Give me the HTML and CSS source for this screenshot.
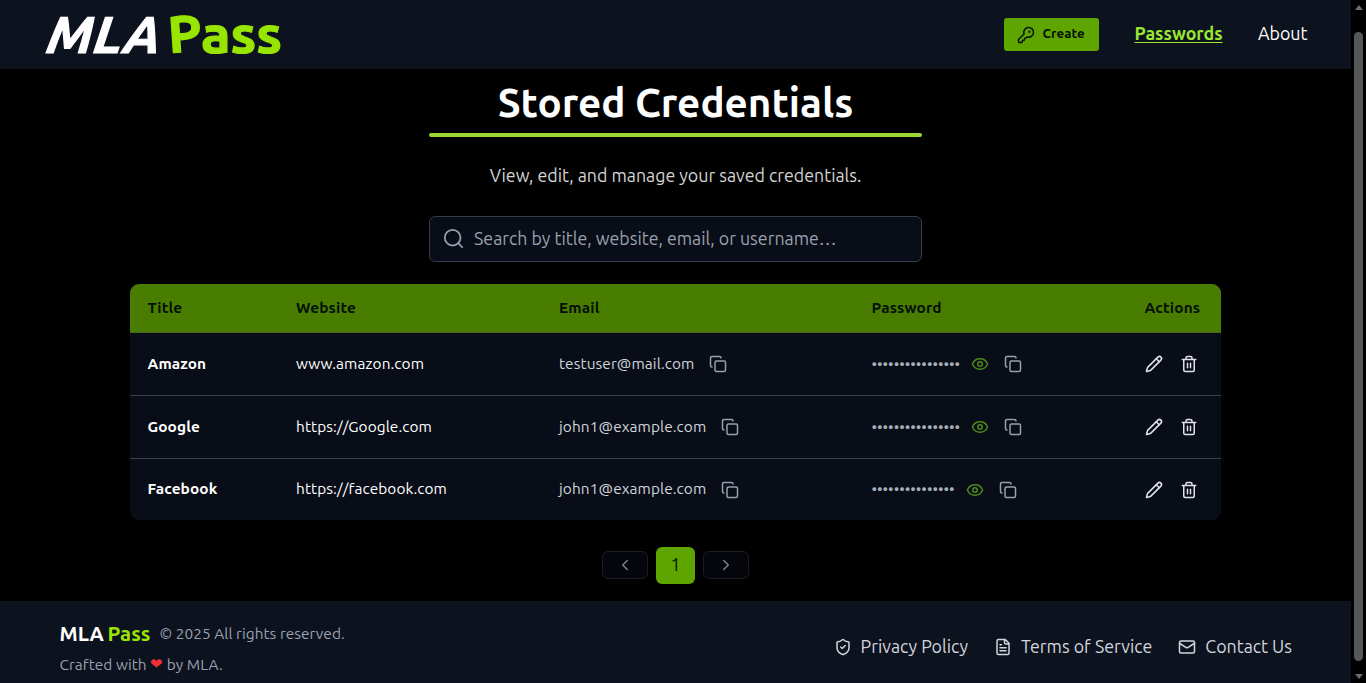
FILE: index.html
```
<!DOCTYPE html>
<html lang="en">
<head>
<meta charset="utf-8">
<title>MLA Pass</title>
<link rel="stylesheet" href="styles.css">
</head>
<body>
<svg class="sprite" aria-hidden="true">
  <symbol id="key" viewBox="0 0 24 24"><path d="M2.6 17.4A2 2 0 0 0 2 18.8V21a1 1 0 0 0 1 1h3a1 1 0 0 0 1-1v-1a1 1 0 0 1 1-1h1a1 1 0 0 0 1-1v-1a1 1 0 0 1 1-1h.2a2 2 0 0 0 1.4-.6l.8-.8a6.5 6.5 0 1 0-4-4z"/><circle cx="16.5" cy="7.5" r=".6"/></symbol>
  <symbol id="search" viewBox="0 0 24 24"><circle cx="11" cy="11" r="9"/><path d="m22 22-4.6-4.6"/></symbol>
  <symbol id="copy" viewBox="0 0 24 24"><rect x="8" y="8" width="14" height="14" rx="2"/><path d="M4 16c-1.1 0-2-.9-2-2V4c0-1.100.9-2 2-2h10c1.100 0 2 .9 2 2"/></symbol>
  <symbol id="eye" viewBox="0 0 24 24"><path d="M2.060 12.350a1 1 0 0 1 0-.7 10.750 10.750 0 0 1 19.880 0 1 1 0 0 1 0 .7 10.750 10.750 0 0 1-19.880 0"/><circle cx="12" cy="12" r="3"/></symbol>
  <symbol id="pencil" viewBox="0 0 24 24"><path d="M21.170 6.810a1 1 0 0 0-3.980-3.990L3.840 16.170a2 2 0 0 0-.5.830l-1.320 4.350a.5.5 0 0 0 .620.620l4.350-1.320a2 2 0 0 0 .830-.5z"/><path d="m15 5 4 4"/></symbol>
  <symbol id="trash" viewBox="0 0 24 24"><path d="M3 6h18M19 6v14c0 1-1 2-2 2H7c-1 0-2-1-2-2V6M8 6V4c0-1 1-2 2-2h4c1 0 2 1 2 2v2M10 11v6M14 11v6"/></symbol>
  <symbol id="left" viewBox="0 0 24 24"><path d="m15 18-6-6 6-6"/></symbol>
  <symbol id="right" viewBox="0 0 24 24"><path d="m9 18 6-6-6-6"/></symbol>
  <symbol id="shield" viewBox="0 0 24 24"><path d="M20 13c0 5-3.500 7.500-7.660 8.950a1 1 0 0 1-.670-.010C7.500 20.500 4 18 4 13V6a1 1 0 0 1 1-1c2 0 4.500-1.200 6.240-2.720a1.170 1.170 0 0 1 1.520 0C14.510 3.810 17 5 19 5a1 1 0 0 1 1 1z"/><path d="m9 12 2 2 4-4"/></symbol>
  <symbol id="file" viewBox="0 0 24 24"><path d="M15 2H6a2 2 0 0 0-2 2v16a2 2 0 0 0 2 2h12a2 2 0 0 0 2-2V7zM14 2v4a2 2 0 0 0 2 2h4M10 9H8M16 13H8M16 17H8"/></symbol>
  <symbol id="mail" viewBox="0 0 24 24"><rect x="2" y="4" width="20" height="16" rx="2"/><path d="m22 7-8.970 5.700a1.940 1.940 0 0 1-2.060 0L2 7"/></symbol>
</svg>
<div class="app">
  <div class="page">
    <header class="topbar">
      <svg class="logo" width="245" height="66" viewBox="0 0 245 66" role="img">
        <text class="logo-mla" transform="translate(4 49.500) skewX(-5)" textLength="114" lengthAdjust="spacingAndGlyphs">MLA</text>
        <text class="logo-p" transform="translate(127 50) rotate(-4)" textLength="34" lengthAdjust="spacingAndGlyphs">P</text>
        <text class="logo-pass" x="159" y="49.500" textLength="81" lengthAdjust="spacingAndGlyphs">ass</text>
      </svg>
      <nav class="nav">
        <a class="create"><svg class="icon"><use href="#key"/></svg><span>Create</span></a>
        <a class="nav-link active">Passwords</a>
        <a class="nav-link">About</a>
      </nav>
    </header>
    <main class="main">
      <h1 class="title">Stored Credentials</h1>
      <div class="rule"></div>
      <p class="subtitle">View, edit, and manage your saved credentials.</p>
      <div class="search"><svg class="icon"><use href="#search"/></svg><span>Search by title, website, email, or username…</span></div>
      <section class="table">
        <div class="row head"><span>Title</span><span>Website</span><span>Email</span><span>Password</span><span>Actions</span></div>
        <div class="row">
          <b>Amazon</b><span class="site">www.amazon.com</span>
          <span class="cell mail"><span>testuser@mail.com</span><svg class="icon"><use href="#copy"/></svg></span>
          <span class="cell secret"><span class="dots">••••••••••••••••</span><svg class="icon eye"><use href="#eye"/></svg><svg class="icon"><use href="#copy"/></svg></span>
          <span class="cell actions"><svg class="icon"><use href="#pencil"/></svg><svg class="icon"><use href="#trash"/></svg></span>
        </div>
        <div class="row">
          <b>Google</b><span class="site">https://Google.com</span>
          <span class="cell mail"><span>john1@example.com</span><svg class="icon"><use href="#copy"/></svg></span>
          <span class="cell secret"><span class="dots">••••••••••••••••</span><svg class="icon eye"><use href="#eye"/></svg><svg class="icon"><use href="#copy"/></svg></span>
          <span class="cell actions"><svg class="icon"><use href="#pencil"/></svg><svg class="icon"><use href="#trash"/></svg></span>
        </div>
        <div class="row last">
          <b>Facebook</b><span class="site">https://facebook.com</span>
          <span class="cell mail"><span>john1@example.com</span><svg class="icon"><use href="#copy"/></svg></span>
          <span class="cell secret"><span class="dots">•••••••••••••••</span><svg class="icon eye"><use href="#eye"/></svg><svg class="icon"><use href="#copy"/></svg></span>
          <span class="cell actions"><svg class="icon"><use href="#pencil"/></svg><svg class="icon"><use href="#trash"/></svg></span>
        </div>
      </section>
      <div class="pager">
        <span class="step"><svg class="icon"><use href="#left"/></svg></span>
        <span class="current">1</span>
        <span class="step"><svg class="icon"><use href="#right"/></svg></span>
      </div>
    </main>
    <footer class="footer">
      <div class="brand">
        <div class="line"><span class="name">MLA</span><span class="name pass">Pass</span><span class="rights">© 2025 All rights reserved.</span></div>
        <div class="line crafted"><span>Crafted with</span><span class="heart">❤</span><span class="by">by MLA.</span></div>
      </div>
      <div class="links">
        <a><svg class="icon"><use href="#shield"/></svg><span>Privacy Policy</span></a>
        <a><svg class="icon"><use href="#file"/></svg><span>Terms of Service</span></a>
        <a><svg class="icon"><use href="#mail"/></svg><span>Contact Us</span></a>
      </div>
    </footer>
  </div>
  <div class="scrollbar"><i class="up"></i><i class="thumb"></i><i class="down"></i></div>
</div>
</body>
</html>
```
FILE: styles.css
```
* { box-sizing: border-box; }
body { margin: 0; background: #000; color: #fff; font-family: Ubuntu, "Noto Sans", sans-serif; overflow: hidden; }
.sprite { position: absolute; width: 0; height: 0; }
.app { display: flex; height: 683px; }
.page { width: 1351px; display: flex; flex-direction: column; }
.icon { display: block; flex: none; width: 18px; height: 18px; fill: none; stroke: currentColor; stroke-width: 2; stroke-linecap: round; stroke-linejoin: round; }

.topbar { height: 69px; background: #0d121f; display: flex; justify-content: space-between; align-items: center; padding: 0 43px 0 42px; }
.logo { display: block; margin-top: 3px; }
.logo text { font-weight: 700; font-size: 51.5px; stroke-width: 1.2px; }
.logo-mla { fill: #fff; stroke: #fff; font-style: italic; }
.logo-p, .logo-pass { fill: #97e500; stroke: #97e500; }
.nav { display: flex; align-items: center; }
.create { width: 95px; height: 33px; border-radius: 3px; background: #5ea500; color: #071006; display: flex; align-items: center; padding-left: 13px; font-size: 13.2px; letter-spacing: .1px; font-weight: 700; }
.create span { margin-left: 8px; padding-bottom: 3px; }
.nav-link { margin-left: 35px; font-size: 17.8px; line-height: 24px; width: 50px; padding-bottom: 3px; }
.nav-link.active { margin-left: 36px; width: 88.500px; color: #9ae630; font-weight: 700; text-decoration: underline; text-decoration-thickness: 1px; text-underline-offset: 2px; }

.main { height: 532px; display: flex; flex-direction: column; align-items: center; }
.title { height: 64px; margin: 0; font-size: 40.4px; line-height: 67px; white-space: nowrap; }
.rule { width: 493px; height: 4px; border-radius: 2px; background: #9bd735; }
.subtitle { margin: 26px 0 0; height: 24px; font-size: 17.8px; line-height: 25px; color: #d4d4d4; }
.search { width: 493px; height: 46px; margin-top: 29px; border: 1px solid #353b49; border-radius: 6px; background: #090d17; color: #99a1af; display: flex; align-items: center; padding: 0 0 1px 13px; font-size: 17.8px; }
.search > span { padding-bottom: 1px; }
.search .icon { width: 21px; height: 21px; margin-right: 10px; }

.table { width: 1091px; height: 236px; margin-top: 22px; border-radius: 9px; overflow: hidden; background: #090d17; font-size: 15.4px; letter-spacing: .1px; }
.row { display: grid; grid-template-columns: 148.500px 263px 312.500px 273px 1fr; align-items: center; padding-left: 17.500px; height: 63px; border-bottom: 1px solid #3b404d; }
.row.last { height: 61px; border: 0; }
.row > b, .site, .mail > span, .dots, .head > span { padding-bottom: 2px; }
.row.head { height: 49px; background: #497d00; color: #051006; border-bottom-color: #4b6325; font-weight: 700; letter-spacing: .15px; }
.cell { display: flex; align-items: center; color: #99a1af; }
.mail > span { color: #d1d5dc; }
.mail .icon { margin-left: 15px; }
.dots { font-size: 15.400px; letter-spacing: 0; color: #a8afbb; }
.eye { color: #4d8a18; margin: 0 15px 0 11px; }
.actions { color: #e0e3e8; gap: 17px; }

.pager { display: flex; align-items: center; gap: 8px; margin-top: 27px; height: 37px; }
.step { width: 46px; height: 28px; margin-bottom: 1px; border: 1px solid #1b1d25; border-radius: 6px; background: #05060b; color: #7d828b; display: flex; align-items: center; justify-content: center; }
.current { width: 39px; height: 37px; border-radius: 6px; background: #5ea500; color: #071006; font-size: 17.8px; line-height: 35px; text-align: center; }

.footer { height: 82px; background: #0d121f; display: flex; justify-content: space-between; padding: 0 59px 0 59.500px; color: #99a1af; }
.brand { padding-top: 19px; font-size: 15.4px; letter-spacing: .05px; }
.line { display: flex; align-items: center; height: 26px; white-space: nowrap; }
.name { width: 48px; color: #fff; font-size: 20.4px; font-weight: 700; letter-spacing: 0; }
.name.pass { width: 52px; color: #9ae600; }
.crafted { margin-top: 5px; }
.heart { width: 13px; margin: 0 3.500px; color: #ef3038; letter-spacing: 0; }
.links { display: flex; align-items: center; gap: 26px; padding-top: 10px; color: #d1d5dc; font-size: 17.8px; }
.links a { display: flex; align-items: center; gap: 9px; white-space: nowrap; }
.links span { padding-bottom: 2px; }

.scrollbar { width: 15px; background: #000; display: flex; flex-direction: column; align-items: center; }
.up, .down { width: 0; height: 0; border: 4px solid transparent; }
.up { border-top: 0; border-bottom: 5px solid #6b6f72; margin-top: 5px; }
.thumb { width: 9px; height: 629px; margin-top: 22px; border-radius: 5px; background: #54585a; }
.down { border-bottom: 0; border-top: 5px solid #6b6f72; margin-top: 13px; }
```
